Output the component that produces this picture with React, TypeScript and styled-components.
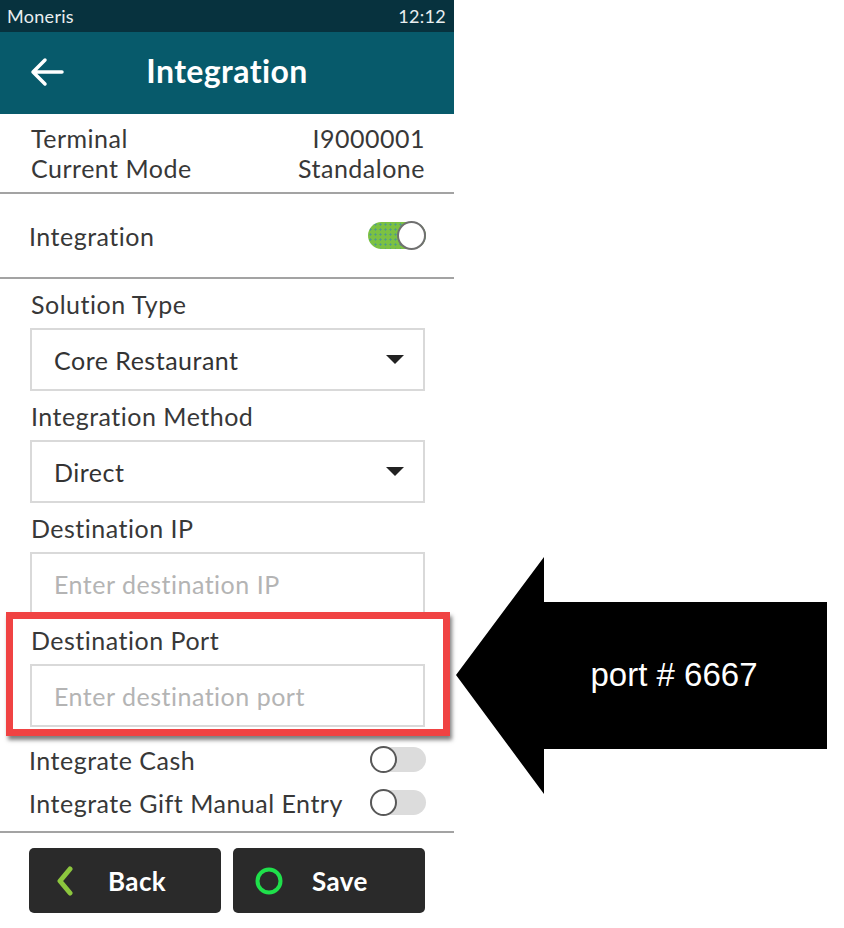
import styled, { createGlobalStyle } from 'styled-components';

const GlobalStyle = createGlobalStyle`
  body {
    margin: 0;
    background: #ffffff;
    font-family: Lato, "Open Sans", sans-serif;
  }
`;

const Page = styled.div`
  display: flex;
  align-items: flex-start;
  width: 844px;
  height: 928px;
  background: #ffffff;
`;

const Phone = styled.div`
  width: 454px;
  display: flex;
  flex-direction: column;
  color: #383838;
  letter-spacing: 0.5px;
`;

const StatusBar = styled.div`
  height: 32px;
  background: #07323e;
  color: #e9eef0;
  font-size: 18px;
  letter-spacing: 0.3px;
  display: flex;
  align-items: center;
  justify-content: space-between;
  padding: 0 8px 0 7px;
`;

const Header = styled.div`
  height: 82px;
  background: #075a6b;
  display: grid;
  grid-template-columns: 1fr auto 1fr;
  align-items: center;
`;

const HeaderBack = styled.div`
  padding-left: 30px;
  padding-bottom: 2px;
  display: flex;
  align-items: center;
`;

const Title = styled.h1`
  margin: 0 0 5px;
  color: #ffffff;
  font-size: 32px;
  font-weight: 700;
  letter-spacing: 0.4px;
`;

const Section = styled.div<{ $height?: number }>`
  border-bottom: 2px solid #a3a3a3;
  height: ${(p) => (p.$height ? `${p.$height}px` : 'auto')};
  display: flex;
  flex-direction: column;
  justify-content: center;
`;

const InfoRow = styled.div`
  display: flex;
  justify-content: space-between;
  padding: 0 29px 0 31px;
  font-size: 25px;
  line-height: 30px;
`;

const ToggleRow = styled.div<{ $height: number }>`
  height: ${(p) => p.$height}px;
  display: flex;
  align-items: center;
  justify-content: space-between;
  padding: 0 28px 0 29px;
  font-size: 25px;
`;

const Form = styled.div`
  padding: 0 29px 0 30px;
  display: flex;
  flex-direction: column;
`;

const FieldGroup = styled.div`
  position: relative;
  display: flex;
  flex-direction: column;
`;

const Highlight = styled.div`
  position: absolute;
  top: -3px;
  left: -24px;
  right: -25px;
  bottom: -9px;
  border: 7px solid #f04343;
  box-shadow: 2px 4px 4px rgba(0, 0, 0, 0.5);
  pointer-events: none;
`;

const FieldLabel = styled.div`
  height: 49px;
  display: flex;
  align-items: center;
  padding-left: 1px;
  font-size: 25px;
`;

const Box = styled.div<{ $placeholder?: boolean }>`
  height: 63px;
  box-sizing: border-box;
  border: 2px solid #d9d9d9;
  padding: 0 19px 0 22px;
  display: flex;
  align-items: center;
  justify-content: space-between;
  font-size: 25px;
  color: ${(p) => (p.$placeholder ? '#b4b4b4' : '#333333')};
`;

const Caret = styled.span`
  width: 0;
  height: 0;
  border-left: 9px solid transparent;
  border-right: 9px solid transparent;
  border-top: 9px solid #222222;
`;

const Track = styled.span<{ $on?: boolean }>`
  width: ${(p) => (p.$on ? 58 : 56)}px;
  height: ${(p) => (p.$on ? 27 : 25)}px;
  border-radius: 14px;
  display: flex;
  align-items: center;
  justify-content: ${(p) => (p.$on ? 'flex-end' : 'flex-start')};
  background-color: ${(p) => (p.$on ? '#7cc142' : '#dcdcdc')};
  background-image: ${(p) =>
    p.$on ? 'radial-gradient(circle, #4f9c8a 0.9px, transparent 1.3px)' : 'none'};
  background-size: 5px 5px;
`;

const Knob = styled.span<{ $on?: boolean }>`
  width: ${(p) => (p.$on ? 29 : 27)}px;
  height: ${(p) => (p.$on ? 29 : 27)}px;
  box-sizing: border-box;
  flex-shrink: 0;
  border-radius: 50%;
  background: #ffffff;
  border: 2px solid ${(p) => (p.$on ? '#707070' : '#585858')};
`;

const Switches = styled.div`
  margin-top: 11px;
  padding-bottom: 7px;
  border-bottom: 2px solid #a3a3a3;
`;

const ButtonBar = styled.div`
  display: flex;
  gap: 12px;
  padding: 15px 29px 0 29px;
`;

const ActionButton = styled.button`
  flex: 1;
  height: 65px;
  border: none;
  border-radius: 5px;
  background: #2a2a2a;
  color: #ffffff;
  display: flex;
  align-items: center;
  padding: 0 0 0 16px;
  gap: 23px;
  font-family: Lato, "Open Sans", sans-serif;
  font-size: 26px;
  font-weight: 700;
  letter-spacing: 0.4px;
`;

const IconSlot = styled.span`
  width: 40px;
  display: flex;
  justify-content: center;
  align-items: center;
`;

const Annotation = styled.div`
  margin-top: 557px;
  margin-left: 1px;
`;

function Toggle({ on }: { on?: boolean }) {
  return (
    <Track $on={on}>
      <Knob $on={on} />
    </Track>
  );
}

function Field({
  label,
  value,
  placeholder,
  select,
  highlighted,
}: {
  label: string;
  value?: string;
  placeholder?: string;
  select?: boolean;
  highlighted?: boolean;
}) {
  return (
    <FieldGroup>
      <FieldLabel>{label}</FieldLabel>
      <Box $placeholder={!value}>
        <span>{value || placeholder}</span>
        {select && <Caret />}
      </Box>
      {highlighted && <Highlight />}
    </FieldGroup>
  );
}

function App() {
  return (
    <>
      <GlobalStyle />
      <Page>
        <Phone>
          <StatusBar>
            <span>Moneris</span>
            <span>12:12</span>
          </StatusBar>
          <Header>
            <HeaderBack>
              <svg width="34" height="30" viewBox="0 0 34 30">
                <path
                  d="M32 15H3M15 3L3 15l12 12"
                  fill="none"
                  stroke="#ffffff"
                  strokeWidth="3.5"
                  strokeLinecap="round"
                  strokeLinejoin="round"
                />
              </svg>
            </HeaderBack>
            <Title>Integration</Title>
            <span />
          </Header>

          <Section $height={78}>
            <InfoRow>
              <span>Terminal</span>
              <span>I9000001</span>
            </InfoRow>
            <InfoRow>
              <span>Current Mode</span>
              <span>Standalone</span>
            </InfoRow>
          </Section>

          <Section>
            <ToggleRow $height={83}>
              <span>Integration</span>
              <Toggle on />
            </ToggleRow>
          </Section>

          <Form>
            <Field label="Solution Type" value="Core Restaurant" select />
            <Field label="Integration Method" value="Direct" select />
            <Field label="Destination IP" placeholder="Enter destination IP" />
            <Field label="Destination Port" placeholder="Enter destination port" highlighted />
          </Form>

          <Switches>
            <ToggleRow $height={43}>
              <span>Integrate Cash</span>
              <Toggle />
            </ToggleRow>
            <ToggleRow $height={43}>
              <span>Integrate Gift Manual Entry</span>
              <Toggle />
            </ToggleRow>
          </Switches>

          <ButtonBar>
            <ActionButton>
              <IconSlot>
                <svg width="20" height="30" viewBox="0 0 20 30">
                  <path
                    d="M15 3L5 15l10 12"
                    fill="none"
                    stroke="#8cc63e"
                    strokeWidth="5"
                    strokeLinecap="round"
                    strokeLinejoin="round"
                  />
                </svg>
              </IconSlot>
              Back
            </ActionButton>
            <ActionButton>
              <IconSlot>
                <svg width="30" height="30" viewBox="0 0 30 30">
                  <circle cx="15" cy="15" r="11.5" fill="none" stroke="#1fe04b" strokeWidth="4" />
                </svg>
              </IconSlot>
              Save
            </ActionButton>
          </ButtonBar>
        </Phone>

        <Annotation>
          <svg width="372" height="237" viewBox="0 0 372 237">
            <polygon points="1,118 89,0 89,45 372,45 372,192 89,192 89,237" fill="#000000" />
            <text
              x="219"
              y="129"
              textAnchor="middle"
              fill="#ffffff"
              fontFamily='"Liberation Sans", Arial, sans-serif'
              fontSize="33"
            >
              port # 6667
            </text>
          </svg>
        </Annotation>
      </Page>
    </>
  );
}

export default App;
